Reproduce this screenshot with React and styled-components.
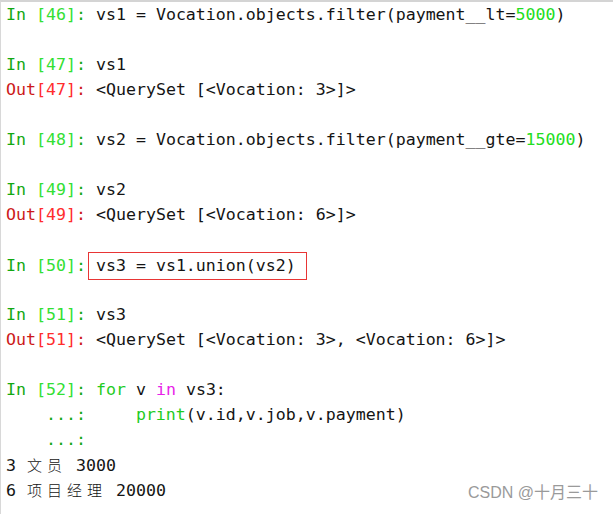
import React from 'react';
import styled, { createGlobalStyle } from 'styled-components';

const GlobalStyle = createGlobalStyle`
	html, body {
		margin: 0;
		padding: 0;
		background: #ffffff;
	}
`;

const session = [
	{ kind: 'in', n: 46, code: [['vs1 = Vocation.objects.filter(payment__lt='], ['5000', 'num'], [')']] },
	{ kind: 'blank' },
	{ kind: 'in', n: 47, code: [['vs1']] },
	{ kind: 'out', n: 47, code: [['<QuerySet [<Vocation: 3>]>']] },
	{ kind: 'blank' },
	{ kind: 'in', n: 48, code: [['vs2 = Vocation.objects.filter(payment__gte='], ['15000', 'num'], [')']] },
	{ kind: 'blank' },
	{ kind: 'in', n: 49, code: [['vs2']] },
	{ kind: 'out', n: 49, code: [['<QuerySet [<Vocation: 6>]>']] },
	{ kind: 'blank' },
	{ kind: 'in', n: 50, boxed: true, code: [['vs3 = vs1.union(vs2)']] },
	{ kind: 'blank' },
	{ kind: 'in', n: 51, code: [['vs3']] },
	{ kind: 'out', n: 51, code: [['<QuerySet [<Vocation: 3>, <Vocation: 6>]>']] },
	{ kind: 'blank' },
	{ kind: 'in', n: 52, code: [['for', 'kw'], [' v '], ['in', 'op'], [' vs3:']] },
	{ kind: 'cont', code: [['    '], ['print', 'kw'], ['(v.id,v.job,v.payment)']] },
	{ kind: 'cont', code: [] },
	{ kind: 'text', parts: [['3 '], ['文员', 'cjk'], [' 3000']] },
	{ kind: 'text', parts: [['6 '], ['项目经理', 'cjk'], [' 20000']] },
];

function Code({ parts }) {
	return parts.map(([text, tone], i) =>
		tone === 'cjk' ? (
			<Cjk key={i}>{text}</Cjk>
		) : (
			<Token key={i} $tone={tone}>
				{text}
			</Token>
		)
	);
}

function Line({ item }) {
	if (item.kind === 'blank') return <Row>{'\u00a0'}</Row>;
	if (item.kind === 'text')
		return (
			<Row>
				<Code parts={item.parts} />
			</Row>
		);
	if (item.kind === 'cont')
		return (
			<Row>
				<Prompt $tone="in">{'    ...: '}</Prompt>
				<Code parts={item.code} />
			</Row>
		);
	const tone = item.kind;
	const body = <Code parts={item.code} />;
	return (
		<Row>
			<Prompt $tone={tone}>{tone === 'in' ? 'In ' : 'Out'}</Prompt>
			<PromptNum $tone={tone}>[{item.n}]</PromptNum>
			<Prompt $tone={tone}>: </Prompt>
			{item.boxed ? <Marked>{body}</Marked> : body}
		</Row>
	);
}

export default function App() {
	return (
		<Screen>
			<GlobalStyle />
			<Console>
				{session.map((item, i) => (
					<Line key={i} item={item} />
				))}
			</Console>
			<Watermark>CSDN @十月三十</Watermark>
		</Screen>
	);
}

const toneColors = {
	num: '#22dd22',
	kw: '#1fcc1f',
	op: '#e81ee8',
};

const Screen = styled.div`
	position: relative;
	width: 613px;
	height: 514px;
	box-sizing: border-box;
	border-top: 2px solid #d4d4d4;
	border-left: 1px solid #d8d8d8;
	overflow: hidden;
	background: #fff;
`;

const Console = styled.div`
	padding: 0 0 0 5px;
	font-family: 'DejaVu Sans Mono', 'Liberation Mono', monospace;
	font-size: 16.6px;
	color: #141414;
`;

const Row = styled.div`
	height: 25px;
	line-height: 25px;
	white-space: pre;
`;

const Prompt = styled.span`
	color: ${p => (p.$tone === 'out' ? '#cc1a1a' : '#12a812')};
`;

const PromptNum = styled.span`
	color: ${p => (p.$tone === 'out' ? '#ff2d2d' : '#33e033')};
`;

const Token = styled.span`
	color: ${p => toneColors[p.$tone] || 'inherit'};
`;

const Cjk = styled.span`
	font-family: 'Noto Sans CJK SC', sans-serif;
	font-size: 15px;
	font-weight: 300;
	letter-spacing: 5px;
	padding-left: 1px;
	margin-right: -1px;
`;

const Marked = styled.span`
	display: inline-block;
	line-height: 20px;
	padding: 3px 10px 3px 7px;
	margin-left: -8px;
	border: 1px solid #e83535;
`;

const Watermark = styled.div`
	position: absolute;
	right: 15px;
	bottom: 11px;
	font-family: 'Liberation Sans', 'Noto Sans CJK SC', sans-serif;
	font-size: 16px;
	color: #9a9a9a;
`;
